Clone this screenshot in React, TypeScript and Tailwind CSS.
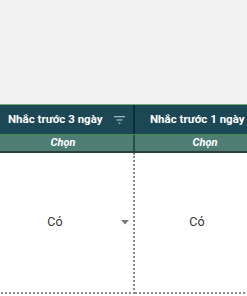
import React from 'react';

interface Column {
  title: string;
  sub: string;
  value: string;
}

const columns: Column[] = [
  { title: 'Nhắc trước 3 ngày', sub: 'Chọn', value: 'Có' },
  { title: 'Nhắc trước 1 ngày', sub: 'Chọn', value: 'Có' },
];

const FilterIcon: React.FC = () => (
  <svg width="12" height="10" viewBox="0 0 12 10" className="shrink-0">
    <rect x="0" y="1" width="11" height="1.3" fill="#9fb6bd" />
    <rect x="2.5" y="4.3" width="6" height="1.3" fill="#9fb6bd" />
    <rect x="4.5" y="7.5" width="2" height="1.3" fill="#9fb6bd" />
  </svg>
);

const ColumnView: React.FC<{ col: Column }> = ({ col }) => (
  <div className="flex flex-col w-[142px] shrink-0">
    <div className="h-[29px] flex items-center pl-[15px] pr-[7px] bg-[#1c4754] border-r-2 border-[#0e2c33]">
      <span className="text-[11.5px] font-bold text-white whitespace-nowrap flex-1">{col.title}</span>
      <FilterIcon />
    </div>
    <div className="h-px bg-[#3f8a4a]" />
    <div className="h-[16px] flex items-center justify-center bg-[#4e7d76] border-r-2 border-[#2b4a48]">
      <span className="text-[11px] font-bold italic text-white">{col.sub}</span>
    </div>
    <div className="h-[2px] bg-[#2c3d3d]" />
    <div className="h-[141px] flex items-center bg-white border-r-2 border-b-2 border-dotted border-[#8a8a8a]">
      <span className="flex-1 text-center text-[12.5px] text-[#333] pr-[4px]">{col.value}</span>
      <span className="w-[12px] flex justify-start">
        <svg width="8" height="5" viewBox="0 0 8 5">
          <path d="M0 0 H8 L4 4.5 Z" fill="#7a7a7a" />
        </svg>
      </span>
    </div>
  </div>
);

export default function App() {
  return (
    <div className="w-[247px] h-[296px] overflow-hidden flex flex-col bg-white" style={{ fontFamily: 'Roboto, "Noto Sans", sans-serif' }}>
      <div className="h-[104px] bg-[#f2f2f2]" />
      <div className="h-px bg-[#6fae72]" />
      <div className="flex -ml-[7px]">
        {columns.map((c, i) => (
          <ColumnView key={i} col={c} />
        ))}
      </div>
    </div>
  );
}
